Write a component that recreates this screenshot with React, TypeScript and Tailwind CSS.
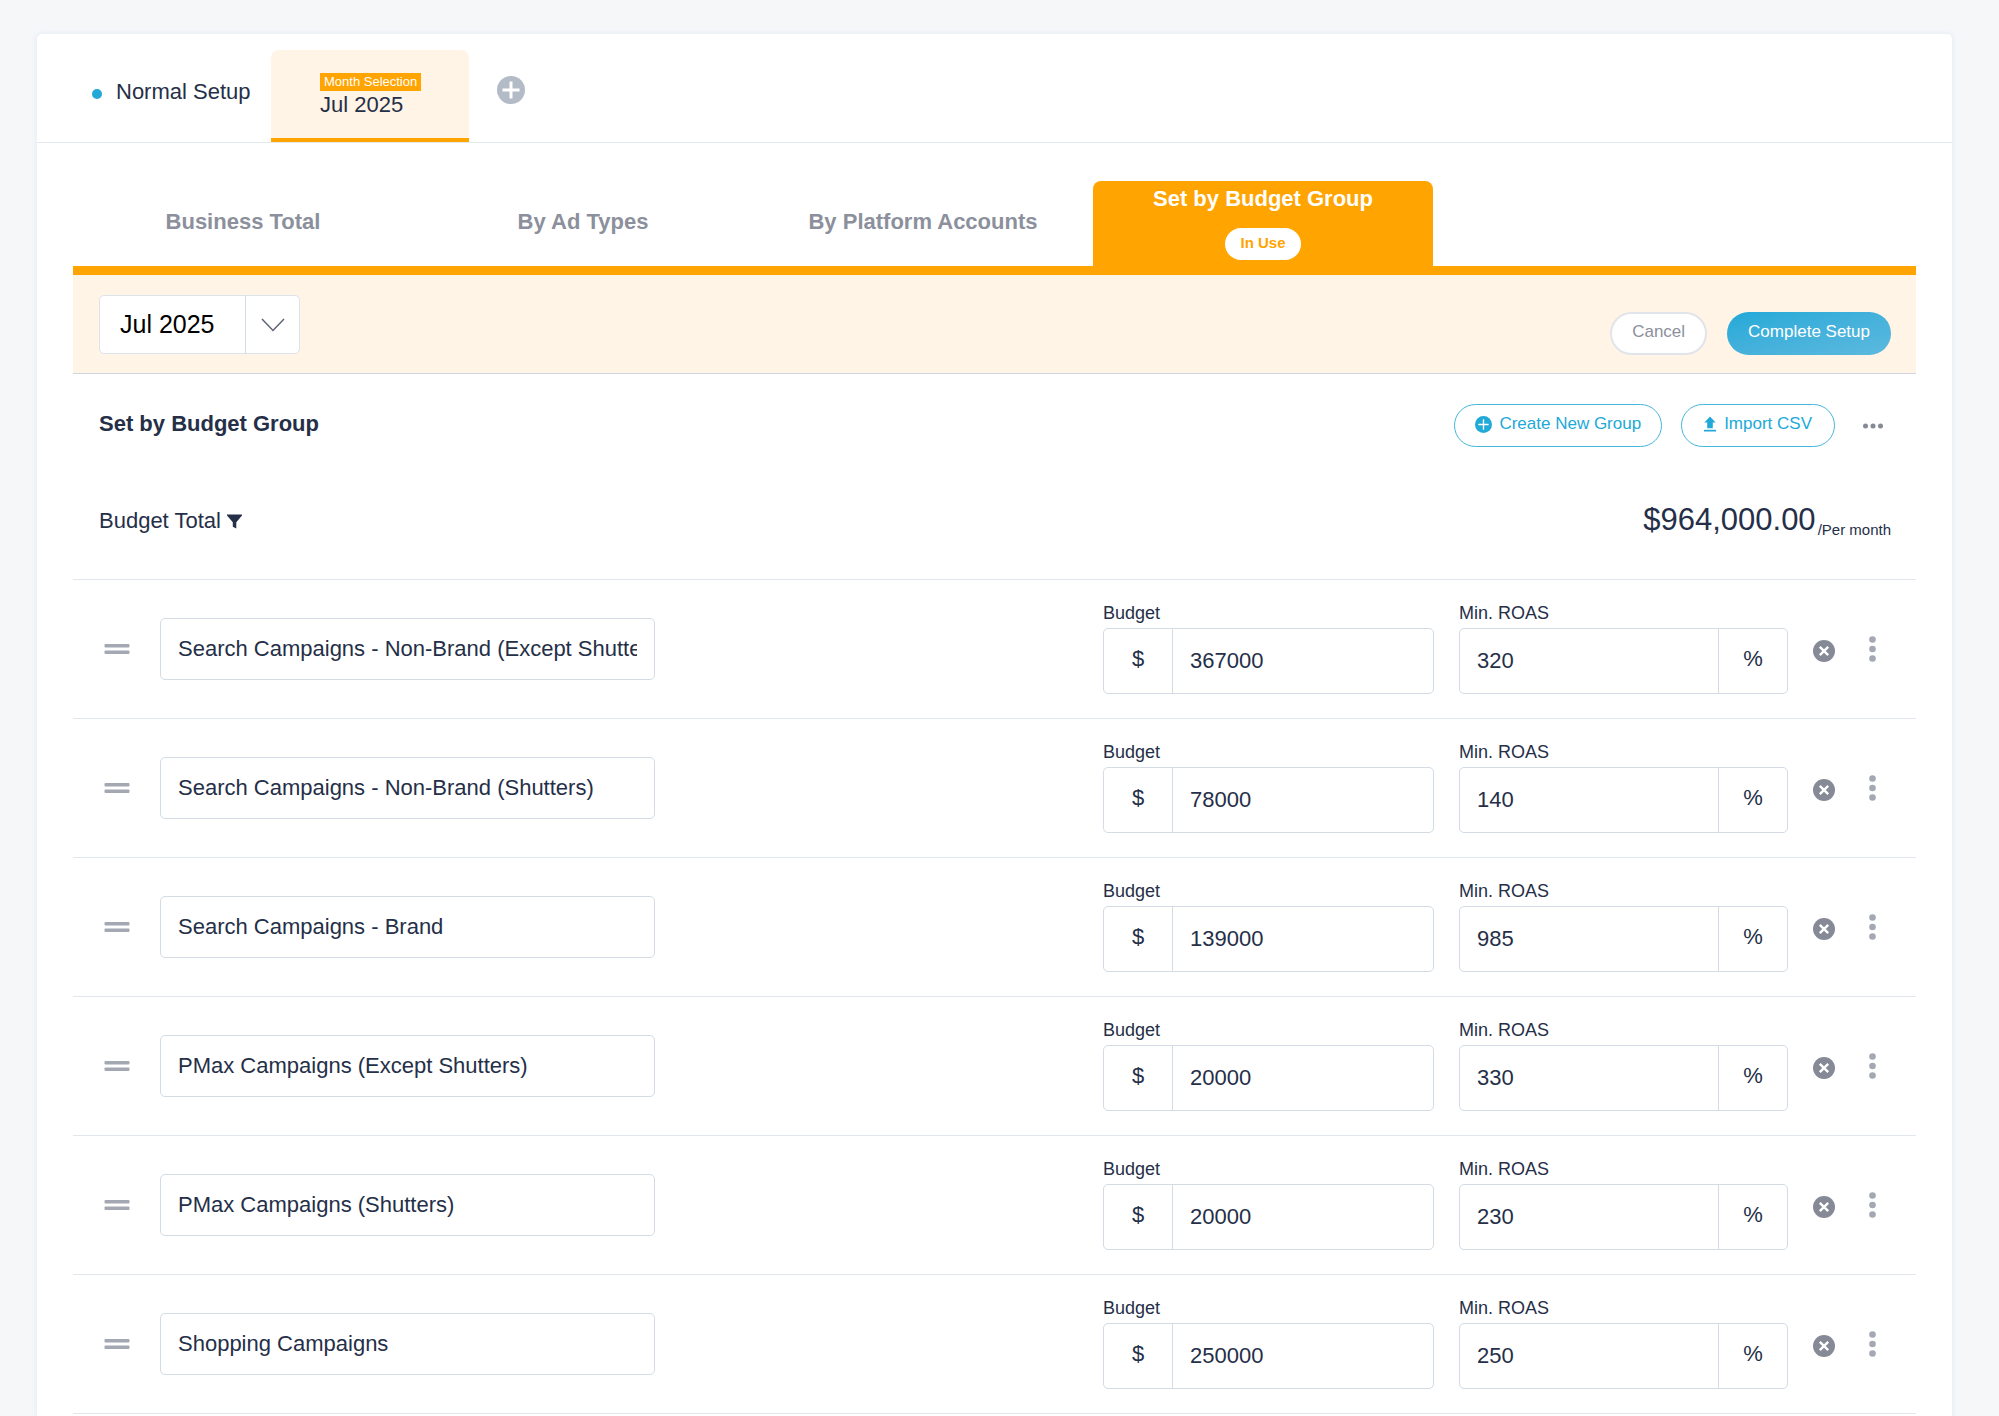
import { useState } from "react";

type Group = { name: string; budget: string; roas: string };

const groups: Group[] = [
  { name: "Search Campaigns - Non-Brand (Except Shutters)", budget: "367000", roas: "320" },
  { name: "Search Campaigns - Non-Brand (Shutters)", budget: "78000", roas: "140" },
  { name: "Search Campaigns - Brand", budget: "139000", roas: "985" },
  { name: "PMax Campaigns (Except Shutters)", budget: "20000", roas: "330" },
  { name: "PMax Campaigns (Shutters)", budget: "20000", roas: "230" },
  { name: "Shopping Campaigns", budget: "250000", roas: "250" },
];

const inactiveTabs = ["Business Total", "By Ad Types", "By Platform Accounts"];

function PlusCircle({ className, stroke }: { className: string; stroke: number }) {
  return (
    <svg viewBox="0 0 28 28" className={className} aria-hidden="true">
      <circle cx="14" cy="14" r="14" fill="currentColor" />
      <path d="M14 5.5v17M5.5 14h17" stroke="#fff" strokeWidth={stroke} />
    </svg>
  );
}

function Chevron() {
  return (
    <svg viewBox="0 0 24 14" className="h-[14px] w-6" fill="none" stroke="#5d6475" strokeWidth="1.5" aria-hidden="true">
      <path d="M1 1l11 11.5L23 1" />
    </svg>
  );
}

function Upload() {
  return (
    <svg viewBox="0 0 12 16" className="h-4 w-3" fill="currentColor" aria-hidden="true">
      <path d="M6 .5l5.6 6H8.8v5.7H3.2V6.500H.4z" />
      <path d="M0 13.8h12v1.700H0z" />
    </svg>
  );
}

function Funnel() {
  return (
    <svg viewBox="0 0 15 15" className="h-[15px] w-[15px]" fill="currentColor" aria-hidden="true">
      <path d="M0 .5h15v1L9.300 8.300v6.200L5.800 12.800V8.300L0 1.500z" />
    </svg>
  );
}

function Remove() {
  return (
    <svg viewBox="0 0 22 22" className="h-[22px] w-[22px]" aria-hidden="true">
      <circle cx="11" cy="11" r="11" fill="#858a96" />
      <path d="M6.8 6.8l8.4 8.4M15.2 6.8l-8.4 8.4" stroke="#fff" strokeWidth="2.4" />
    </svg>
  );
}

function Kebab() {
  return (
    <svg viewBox="0 0 7 26" className="h-[26px] w-[7px]" fill="#a3a8b2" aria-hidden="true">
      <circle cx="3.5" cy="3.5" r="3.3" />
      <circle cx="3.5" cy="13" r="3.3" />
      <circle cx="3.5" cy="22.5" r="3.3" />
    </svg>
  );
}

function Ellipsis() {
  return (
    <svg viewBox="0 0 20 6" className="h-[6px] w-5" fill="#858a96" aria-hidden="true">
      <circle cx="2.5" cy="3" r="2.5" />
      <circle cx="10" cy="3" r="2.5" />
      <circle cx="17.5" cy="3" r="2.5" />
    </svg>
  );
}

function Handle() {
  return (
    <svg viewBox="0 0 26 12" className="h-3 w-[26px]" fill="#a3a8b2" aria-hidden="true">
      <rect x="0.5" y="1" width="25" height="3.5" rx="1" />
      <rect x="0.5" y="7.5" width="25" height="3.5" rx="1" />
    </svg>
  );
}

function GroupRow({ group, index }: { group: Group; index: number }) {
  const [name, setName] = useState(group.name);
  const [budget, setBudget] = useState(group.budget);
  const [roas, setRoas] = useState(group.roas);
  return (
    <li className="flex h-[139px] items-center border-b border-[#e1e7ed] pr-[40px] pl-[31px]">
      <div className="flex flex-1 items-center gap-[30px]">
        <button type="button" aria-label="Reorder group" className="cursor-grab">
          <Handle />
        </button>
        <input
          aria-label="Group name"
          value={name}
          onChange={(e) => setName(e.target.value)}
          className="h-[62px] w-[495px] rounded-[5px] border border-[#d3dbe4] px-[17px]"
        />
      </div>
      <div className="flex items-center">
        <div className="mr-[25px] w-[331px] pb-1.5">
          <label htmlFor={`budget-${index}`} className="block text-[18px] leading-[30px]">
            Budget
          </label>
          <div className="flex h-[66px] rounded-[5px] border border-[#d3dbe4]">
            <span className="flex w-[69px] items-center justify-center border-r border-[#d3dbe4] pb-1">$</span>
            <input
              id={`budget-${index}`}
              value={budget}
              onChange={(e) => setBudget(e.target.value)}
              className="min-w-0 flex-1 px-[17px]"
            />
          </div>
        </div>
        <div className="mr-[25px] w-[329px] pb-1.5">
          <label htmlFor={`roas-${index}`} className="block text-[18px] leading-[30px]">
            Min. ROAS
          </label>
          <div className="flex h-[66px] rounded-[5px] border border-[#d3dbe4]">
            <input
              id={`roas-${index}`}
              value={roas}
              onChange={(e) => setRoas(e.target.value)}
              className="min-w-0 flex-1 px-[17px]"
            />
            <span className="flex w-[69px] items-center justify-center border-l border-[#d3dbe4] pb-1">%</span>
          </div>
        </div>
        <button type="button" aria-label="Remove group" className="mr-[34px] pt-[3px]">
          <Remove />
        </button>
        <button type="button" aria-label="Group options">
          <Kebab />
        </button>
      </div>
    </li>
  );
}

export default function App() {
  return (
    <div className="flex min-h-screen flex-col bg-[#f5f7f9] pt-[34px] pr-[47px] pl-[37px] font-['Liberation_Sans',Arial,sans-serif] text-[22px] leading-[28px] text-[#252f48]">
      <main className="flex-1 rounded-t-[5px] bg-white shadow-[0_0_4px_1px_#e6ecf2]">
        <nav className="flex h-[109px] items-end border-b border-[#e3e9ef]" aria-label="Setup period">
          <button type="button" className="flex h-[92px] w-[234px] items-center pb-2 pl-[55px]">
            <span className="mt-1 mr-[14px] h-[10px] w-[10px] rounded-full bg-[#21a9d8]" />
            Normal Setup
          </button>
          <button
            type="button"
            className="flex h-[92px] w-[198px] flex-col items-start rounded-t-[8px] border-b-4 border-[#ffa400] bg-[#fff4e5] pt-[23px] pl-[49px]"
          >
            <span className="bg-[#ffa400] px-1 text-[13px] leading-[18px] text-white">Month Selection</span>
            <span>Jul 2025</span>
          </button>
          <button type="button" aria-label="Add month" className="mb-[38px] ml-7 text-[#b3bbc6]">
            <PlusCircle className="h-7 w-7" stroke={3} />
          </button>
        </nav>

        <div className="px-9 pt-[38px]">
          <nav className="flex h-[94px] border-b-[9px] border-[#ffa400] font-bold" aria-label="Budget mode">
            {inactiveTabs.map((tab) => (
              <button key={tab} type="button" className="w-[340px] pb-[3px] text-[#8b909c]">
                {tab}
              </button>
            ))}
            <button
              type="button"
              className="flex w-[340px] flex-col items-center gap-[15px] rounded-t-[8px] bg-[#ffa400] pt-1 text-white"
            >
              Set by Budget Group
              <span className="rounded-full bg-white px-[15px] pb-0.5 text-[15px] leading-[30px] text-[#ffa400]">
                In Use
              </span>
            </button>
          </nav>

          <div className="flex h-[99px] justify-between border-b border-[#cfd6de] bg-[#fff4e5] pt-5 pr-[25px] pl-[26px]">
            <div className="relative h-[59px] w-[201px]">
              <select
                aria-label="Month"
                className="h-full w-full appearance-none rounded-[5px] border border-[#dde3ea] bg-white pb-0.5 pl-5 text-[25px] text-black"
              >
                <option>Jul 2025</option>
              </select>
              <span className="pointer-events-none absolute inset-y-0 right-0 flex w-[55px] items-center justify-center border-l border-[#d3dbe4]">
                <Chevron />
              </span>
            </div>
            <div className="flex gap-[20px] pt-[17px] text-[17px]">
              <button type="button" className="h-[43px] rounded-full border-2 border-[#e1e4ea] bg-white px-5 pb-1 text-[#8b909c]">
                Cancel
              </button>
              <button
                type="button"
                className="h-[43px] rounded-full bg-linear-to-br from-[#21a9d8] to-[#5cb9de] px-[21px] pb-1 text-white"
              >
                Complete Setup
              </button>
            </div>
          </div>

          <div className="flex items-center justify-between pt-[30px] pr-[25px] pl-[26px]">
            <h1 className="pb-1 font-bold">Set by Budget Group</h1>
            <div className="flex items-center text-[17px] text-[#21a9d8]">
              <button type="button" className="mr-[19px] flex h-[43px] items-center gap-[7px] rounded-full border border-[#45b5dc] px-[20px] pb-[3px]">
                <PlusCircle className="h-[17px] w-[17px]" stroke={2.200} />
                Create New Group
              </button>
              <button type="button" className="mr-7 flex h-[43px] items-center gap-2 rounded-full border border-[#45b5dc] px-[22px] pb-[3px]">
                <Upload />
                Import CSV
              </button>
              <button type="button" aria-label="More actions" className="mr-2">
                <Ellipsis />
              </button>
            </div>
          </div>

          <div className="flex items-center justify-between border-b border-[#e1e7ed] pt-[53px] pr-[25px] pb-[37px] pl-[26px]">
            <div className="flex items-center gap-1.5">
              Budget Total
              <button type="button" aria-label="Filter">
                <Funnel />
              </button>
            </div>
            <p className="pb-0.5 text-[31px] leading-[40px]">
              $964,000.00<sub className="bottom-[-5px] ml-0.5 align-baseline text-[15px]">/Per month</sub>
            </p>
          </div>

          <ul>
            {groups.map((group, index) => (
              <GroupRow key={group.name} group={group} index={index} />
            ))}
          </ul>
        </div>
      </main>
    </div>
  );
}
